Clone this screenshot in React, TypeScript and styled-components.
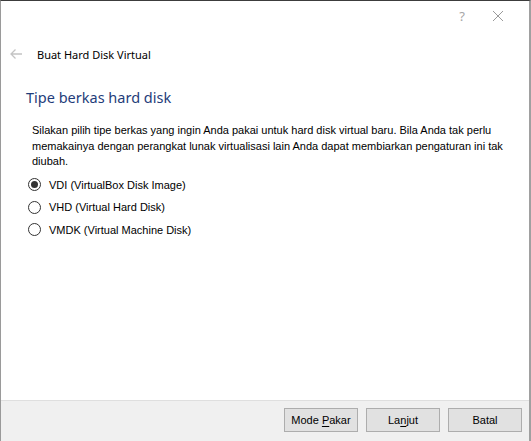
import React from "react";
import styled, { createGlobalStyle } from "styled-components";

const Global = createGlobalStyle`
  html, body { margin: 0; padding: 0; background: #ffffff; }
  body { width: 531px; height: 441px; overflow: hidden; }
`;

const Window = styled.div`
  box-sizing: border-box;
  width: 531px;
  height: 441px;
  background: #ffffff;
  border-top: 1px solid #3c3c3c;
  border-left: 1px solid #9a9a9a;
  border-right: 2px solid #a0a0a0;
  display: flex;
  flex-direction: column;
  font-family: "Liberation Sans", Arial, sans-serif;
  color: #000;
`;

const TitleBar = styled.div`
  height: 30px;
  display: flex;
  justify-content: flex-end;
  align-items: center;
  padding-right: 18px;
  gap: 10px;
`;

const CaptionGlyph = styled.span`
  width: 26px;
  text-align: center;
  color: #a6a6a6;
  font-family: "Noto Sans", sans-serif;
  font-size: 13px;
  display: flex;
  justify-content: center;
  align-items: center;
`;

const NavRow = styled.div`
  display: flex;
  align-items: center;
  height: 22px;
  margin-top: 12px;
  padding-left: 8px;
  gap: 14px;
`;

const NavTitle = styled.span`
  font-family: "Noto Sans", sans-serif;
  font-size: 11px;
  color: #000;
`;

const Content = styled.div`
  flex: 1;
  padding: 0 8px 0 31px;
  display: flex;
  flex-direction: column;
`;

const Heading = styled.h1`
  margin: 21px 0 0 -6px;
  font-family: "Noto Sans", sans-serif;
  font-weight: 400;
  font-size: 14.5px;
  color: #1f3d7a;
  line-height: 22px;
`;

const Description = styled.p`
  margin: 15px 0 0 0;
  font-size: 11px;
  line-height: 15.5px;
  color: #000;
  white-space: nowrap;
`;

const Options = styled.div`
  display: flex;
  flex-direction: column;
  gap: 8.5px;
  margin-top: 8px;
`;

const Option = styled.label`
  display: flex;
  align-items: center;
  gap: 8px;
  font-size: 11px;
  height: 14px;
  margin-left: -4px;
`;

const Radio = styled.span<{ $checked?: boolean }>`
  box-sizing: border-box;
  width: 13px;
  height: 13px;
  border-radius: 50%;
  border: 1px solid #333333;
  background: #fff;
  display: flex;
  align-items: center;
  justify-content: center;
  &::after {
    content: "";
    display: ${(p) => (p.$checked ? "block" : "none")};
    width: 7px;
    height: 7px;
    border-radius: 50%;
    background: #333333;
  }
`;

const Footer = styled.div`
  height: 41px;
  box-sizing: border-box;
  background: #f0f0f0;
  border-top: 1px solid #dfdfdf;
  display: flex;
  justify-content: flex-end;
  align-items: flex-start;
  padding: 7px 7px 0 0;
  gap: 8px;
`;

const Button = styled.button`
  width: 74px;
  height: 24px;
  box-sizing: border-box;
  background: #e1e1e1;
  border: 1px solid #adadad;
  font-family: "Liberation Sans", Arial, sans-serif;
  font-size: 11px;
  color: #000;
  padding: 0;
  u { text-decoration: underline; text-underline-offset: 2px; }
`;

export default function App() {
  return (
    <>
      <Global />
      <Window>
        <TitleBar>
          <CaptionGlyph>?</CaptionGlyph>
          <CaptionGlyph>
            <svg width="12" height="12" viewBox="0 0 12 12">
              <path d="M1 1 L11 11 M11 1 L1 11" stroke="#9a9a9a" strokeWidth="1" />
            </svg>
          </CaptionGlyph>
        </TitleBar>
        <NavRow>
          <svg width="14" height="12" viewBox="0 0 14 12">
            <path d="M13 6 H2 M6.5 1.5 L2 6 L6.5 10.5" stroke="#c4c4c4" strokeWidth="1.3" fill="none" />
          </svg>
          <NavTitle>Buat Hard Disk Virtual</NavTitle>
        </NavRow>
        <Content>
          <Heading>Tipe berkas hard disk</Heading>
          <Description>
            Silakan pilih tipe berkas yang ingin Anda pakai untuk hard disk virtual baru. Bila Anda tak perlu
            <br />
            memakainya dengan perangkat lunak virtualisasi lain Anda dapat membiarkan pengaturan ini tak
            <br />
            diubah.
          </Description>
          <Options>
            <Option>
              <Radio $checked />
              VDI (VirtualBox Disk Image)
            </Option>
            <Option>
              <Radio />
              VHD (Virtual Hard Disk)
            </Option>
            <Option>
              <Radio />
              VMDK (Virtual Machine Disk)
            </Option>
          </Options>
        </Content>
        <Footer>
          <Button>
            Mode <u>P</u>akar
          </Button>
          <Button>
            La<u>n</u>jut
          </Button>
          <Button>Batal</Button>
        </Footer>
      </Window>
    </>
  );
}
